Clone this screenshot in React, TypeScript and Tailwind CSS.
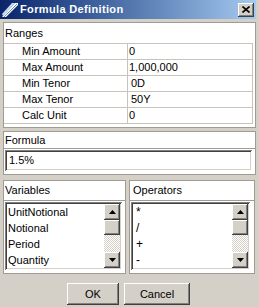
import React from "react";

const raised =
  "bg-[#d4d0c8] shadow-[inset_-1px_-1px_0_#404040,inset_1px_1px_0_#ffffff,inset_-2px_-2px_0_#808080,inset_2px_2px_0_#d4d0c8]";
const sunken =
  "shadow-[inset_1px_1px_0_#808080,inset_-1px_-1px_0_#ffffff,inset_2px_2px_0_#404040,inset_-2px_-2px_0_#d4d0c8]";

function Arrow({ up }: { up?: boolean }) {
  return (
    <div className={`w-[16px] h-[16px] flex items-center justify-center ${raised}`}>
      <svg width="7" height="4" viewBox="0 0 7 4">
        {up ? <polygon points="3.5,0 7,4 0,4" fill="#000" /> : <polygon points="0,0 7,0 3.5,4" fill="#000" />}
      </svg>
    </div>
  );
}

function ListBox({ items, width, itemClass }: { items: string[]; width: string; itemClass?: string }) {
  return (
    <div className={`${width} h-[68px] bg-white ${sunken} p-[2px] flex`}>
      <div className="flex-1 flex flex-col overflow-hidden">
        {items.map((it) => (
          <div key={it} className={`h-[16px] leading-[16px] pl-[1px] ${itemClass ?? ""}`}>
            {it}
          </div>
        ))}
      </div>
      <div className="w-[16px] flex flex-col">
        <Arrow up />
        <div className={`h-[15px] ${raised}`} />
        <div className="flex-1 bg-[repeating-conic-gradient(#d4d0c8_0_25%,#ffffff_0_50%)] bg-[length:2px_2px]" />
        <Arrow />
      </div>
    </div>
  );
}

export default function App() {
  const rows: [string, string, string][] = [
    ["Min Amount", "0", "pl-[1px]"],
    ["Max Amount", "1,000,000", "pl-[1px]"],
    ["Min Tenor", "0D", "pl-[3px]"],
    ["Max Tenor", "50Y", "pl-[3px]"],
    ["Calc Unit", "0", "pl-[1px]"],
  ];
  return (
    <div className="w-[259px] h-[307px] bg-[#d4d0c8] flex flex-col overflow-hidden font-['Liberation_Sans',Arial,sans-serif] text-[11px] text-black">
      {/* Title bar */}
      <div className="w-[256px] h-[19px] shrink-0 bg-gradient-to-r from-[#0a246a] to-[#a6caf0] flex items-center pl-[2px] pr-[2px]">
        <svg width="16" height="16" viewBox="0 0 16 16" className="shrink-0">
          <polygon points="0,15 13,1 16,1 16,3 4,15" fill="#ffffff" />
          <polygon points="0,12 10,1 13,1 1,14" fill="#c8dcf4" />
          <line x1="2" y1="15" x2="15" y2="2" stroke="#5a8ad0" strokeWidth="1" />
        </svg>
        <span className="ml-[2px] font-bold text-white text-[11px] tracking-[0.35px] leading-none">Formula Definition</span>
        <div className={`ml-auto w-[16px] h-[14px] flex items-center justify-center ${raised}`}>
          <svg width="8" height="7" viewBox="0 0 8 7">
            <path d="M0.5 0.5 L7.5 6.5 M7.5 0.5 L0.5 6.5" stroke="#000" strokeWidth="1.6" />
          </svg>
        </div>
      </div>

      <div className="flex flex-col pl-[3px] pt-[3px]">
        {/* Ranges */}
        <div className="w-[253px] h-[106px] bg-white border border-[#a09c94] flex flex-col">
          <div className="h-[20px] flex items-center pl-[1px]">Ranges</div>
          <div className="mr-[2px] border-t border-r border-[#c8c4bc] flex flex-col">
            {rows.map(([k, v, p]) => (
              <div key={k} className="h-[16px] flex border-b border-[#c8c4bc]">
                <div className="w-[124px] border-r border-[#c8c4bc] pl-[18px] leading-[15px]">{k}</div>
                <div className={`flex-1 leading-[15px] ${p}`}>{v}</div>
              </div>
            ))}
          </div>
        </div>

        {/* Formula */}
        <div className="mt-[3px] w-[253px] h-[44px] bg-white border border-[#a09c94] flex flex-col">
          <div className="h-[17px] flex items-center pl-[1px] border-b border-[#a09c94]">Formula</div>
          <div className="pt-[1px] pl-[1px]">
            <div className={`w-[247px] h-[21px] bg-white ${sunken} flex items-center pl-[4px]`}>1.5%</div>
          </div>
        </div>

        {/* Variables / Operators */}
        <div className="mt-[5px] flex gap-[3px]">
          <div className="w-[123px] h-[94px] bg-white border border-[#a09c94] flex flex-col">
            <div className="h-[20px] flex items-center pl-[1px] border-b border-[#a09c94]">Variables</div>
            <div className="pt-[1px] pl-[1px]">
              <ListBox items={["UnitNotional", "Notional", "Period", "Quantity"]} width="w-[117px]" />
            </div>
          </div>
          <div className="w-[126px] h-[94px] bg-white border border-[#a09c94] flex flex-col">
            <div className="h-[20px] flex items-center pl-[3px] border-b border-[#a09c94]">Operators</div>
            <div className="pt-[1px] pl-[1px]">
              <ListBox items={["*", "/", "+", "-"]} width="w-[119px]" itemClass="pl-[3px] text-[12px]" />
            </div>
          </div>
        </div>

        {/* Buttons */}
        <div className="mt-[9px] flex gap-[5px] pl-[64px]">
          <div className={`w-[52px] h-[22px] flex items-center justify-center ${raised}`}>OK</div>
          <div className={`w-[66px] h-[22px] flex items-center justify-center ${raised}`}>Cancel</div>
        </div>
      </div>
    </div>
  );
}
